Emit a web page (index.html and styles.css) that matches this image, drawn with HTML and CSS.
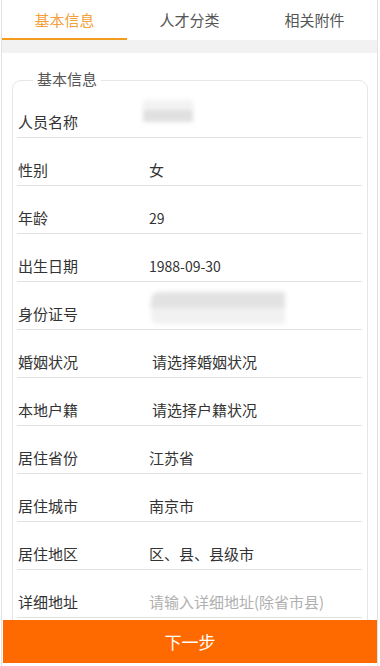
FILE: index.html
```html
<!DOCTYPE html>
<html lang="zh-CN">
<head>
    <meta charset="UTF-8">
    <meta name="viewport" content="width=device-width, initial-scale=1.0">
    <title>基本信息</title>
    <link rel="stylesheet" href="styles.css">
</head>
<body>
    <div class="page">
        <nav class="tabs">
            <a class="tab active" href="#">基本信息</a>
            <a class="tab" href="#">人才分类</a>
            <a class="tab" href="#">相关附件</a>
        </nav>
        <div class="gap"></div>

        <form class="info-form">
            <fieldset class="info-box">
                <legend>基本信息</legend>

                <div class="row">
                    <span class="label">人员名称</span>
                    <span class="value"><span class="blur blur-name"></span></span>
                </div>
                <div class="row">
                    <span class="label">性别</span>
                    <span class="value">女</span>
                </div>
                <div class="row">
                    <span class="label">年龄</span>
                    <span class="value num">29</span>
                </div>
                <div class="row">
                    <span class="label">出生日期</span>
                    <span class="value num">1988-09-30</span>
                </div>
                <div class="row">
                    <span class="label">身份证号</span>
                    <span class="value"><span class="blur blur-id"></span></span>
                </div>
                <div class="row">
                    <span class="label">婚姻状况</span>
                    <span class="value select">请选择婚姻状况</span>
                </div>
                <div class="row">
                    <span class="label">本地户籍</span>
                    <span class="value select">请选择户籍状况</span>
                </div>
                <div class="row">
                    <span class="label">居住省份</span>
                    <span class="value">江苏省</span>
                </div>
                <div class="row">
                    <span class="label">居住城市</span>
                    <span class="value">南京市</span>
                </div>
                <div class="row">
                    <span class="label">居住地区</span>
                    <span class="value">区、县、县级市</span>
                </div>
                <div class="row">
                    <span class="label">详细地址</span>
                    <input class="value input" type="text" placeholder="请输入详细地址(除省市县)">
                </div>
            </fieldset>
        </form>
    </div>

    <button class="next-btn" type="button">下一步</button>
</body>
</html>
```

FILE: styles.css
```css
/* General Styles */
body {
    margin: 0;
    padding: 0;
    background-color: #fff;
    color: #333;
    font-family: "Noto Sans CJK SC", "Noto Sans", sans-serif;
    font-size: 15px;
}

.page {
    margin: 0 2px 0 1px;
    border-left: 1px solid #e2e2e2;
    border-right: 1px solid #e2e2e2;
    min-height: 666px;
    padding-bottom: 60px;
    box-sizing: border-box;
}

/* Tabs */
.tabs {
    display: flex;
    height: 40px;
}

.tab {
    flex: 1;
    text-align: center;
    line-height: 40px;
    color: #555;
    text-decoration: none;
    font-size: 15px;
}

.tab.active {
    color: #f4a03c;
    box-shadow: inset 0 -2px 0 #f29b1d;
}

.gap {
    height: 13px;
    background-color: #f2f2f2;
}

/* Form box */
.info-form {
    margin: 0;
}

.info-box {
    margin: 16px 9px 0 10px;
    padding: 0 5px 30px 4px;
    border: 1px solid #e6e6e6;
    border-radius: 9px;
}

.info-box legend {
    margin-left: 16px;
    padding: 0 4px 2px;
    line-height: 20px;
    color: #555;
}

.row {
    display: flex;
    padding: 22px 0 5px;
    line-height: 20px;
    border-bottom: 1px solid #e2e2e2;
}

.row:first-of-type {
    margin-top: -1px;
}

.label {
    width: 131px;
    padding-left: 1px;
    color: #333;
    flex-shrink: 0;
}

.value {
    flex: 1;
    color: #333;
    position: relative;
    height: 20px;
}

.value.num {
    font-size: 14px;
}

.value.select {
    padding-left: 3px;
}

.value.input {
    border: none;
    outline: none;
    padding: 0;
    margin: 0;
    font-family: inherit;
    font-size: 15px;
    line-height: 20px;
    background: transparent;
    min-width: 0;
}

.value.input::placeholder {
    color: #b0b0b0;
}

/* blurred private data */
.blur {
    position: absolute;
    display: block;
    filter: blur(2px);
}

.blur-name {
    left: -6px;
    top: -12px;
    width: 50px;
    height: 22px;
    background: linear-gradient(#f2f2f2 0 45%, #e0e0e0 45% 100%);
}

.blur-id {
    left: 2px;
    top: -12px;
    width: 134px;
    height: 32px;
    background: linear-gradient(#e2e2e2 0 50%, #f1f1f1 50% 100%);
    border-radius: 8px 0 0 8px;
}

/* Bottom button */
.next-btn {
    position: fixed;
    left: 3px;
    right: 3px;
    bottom: 3px;
    height: 43px;
    border: none;
    background-color: #ff6a00;
    color: #fff;
    font-family: inherit;
    font-size: 17px;
    cursor: pointer;
}
```
